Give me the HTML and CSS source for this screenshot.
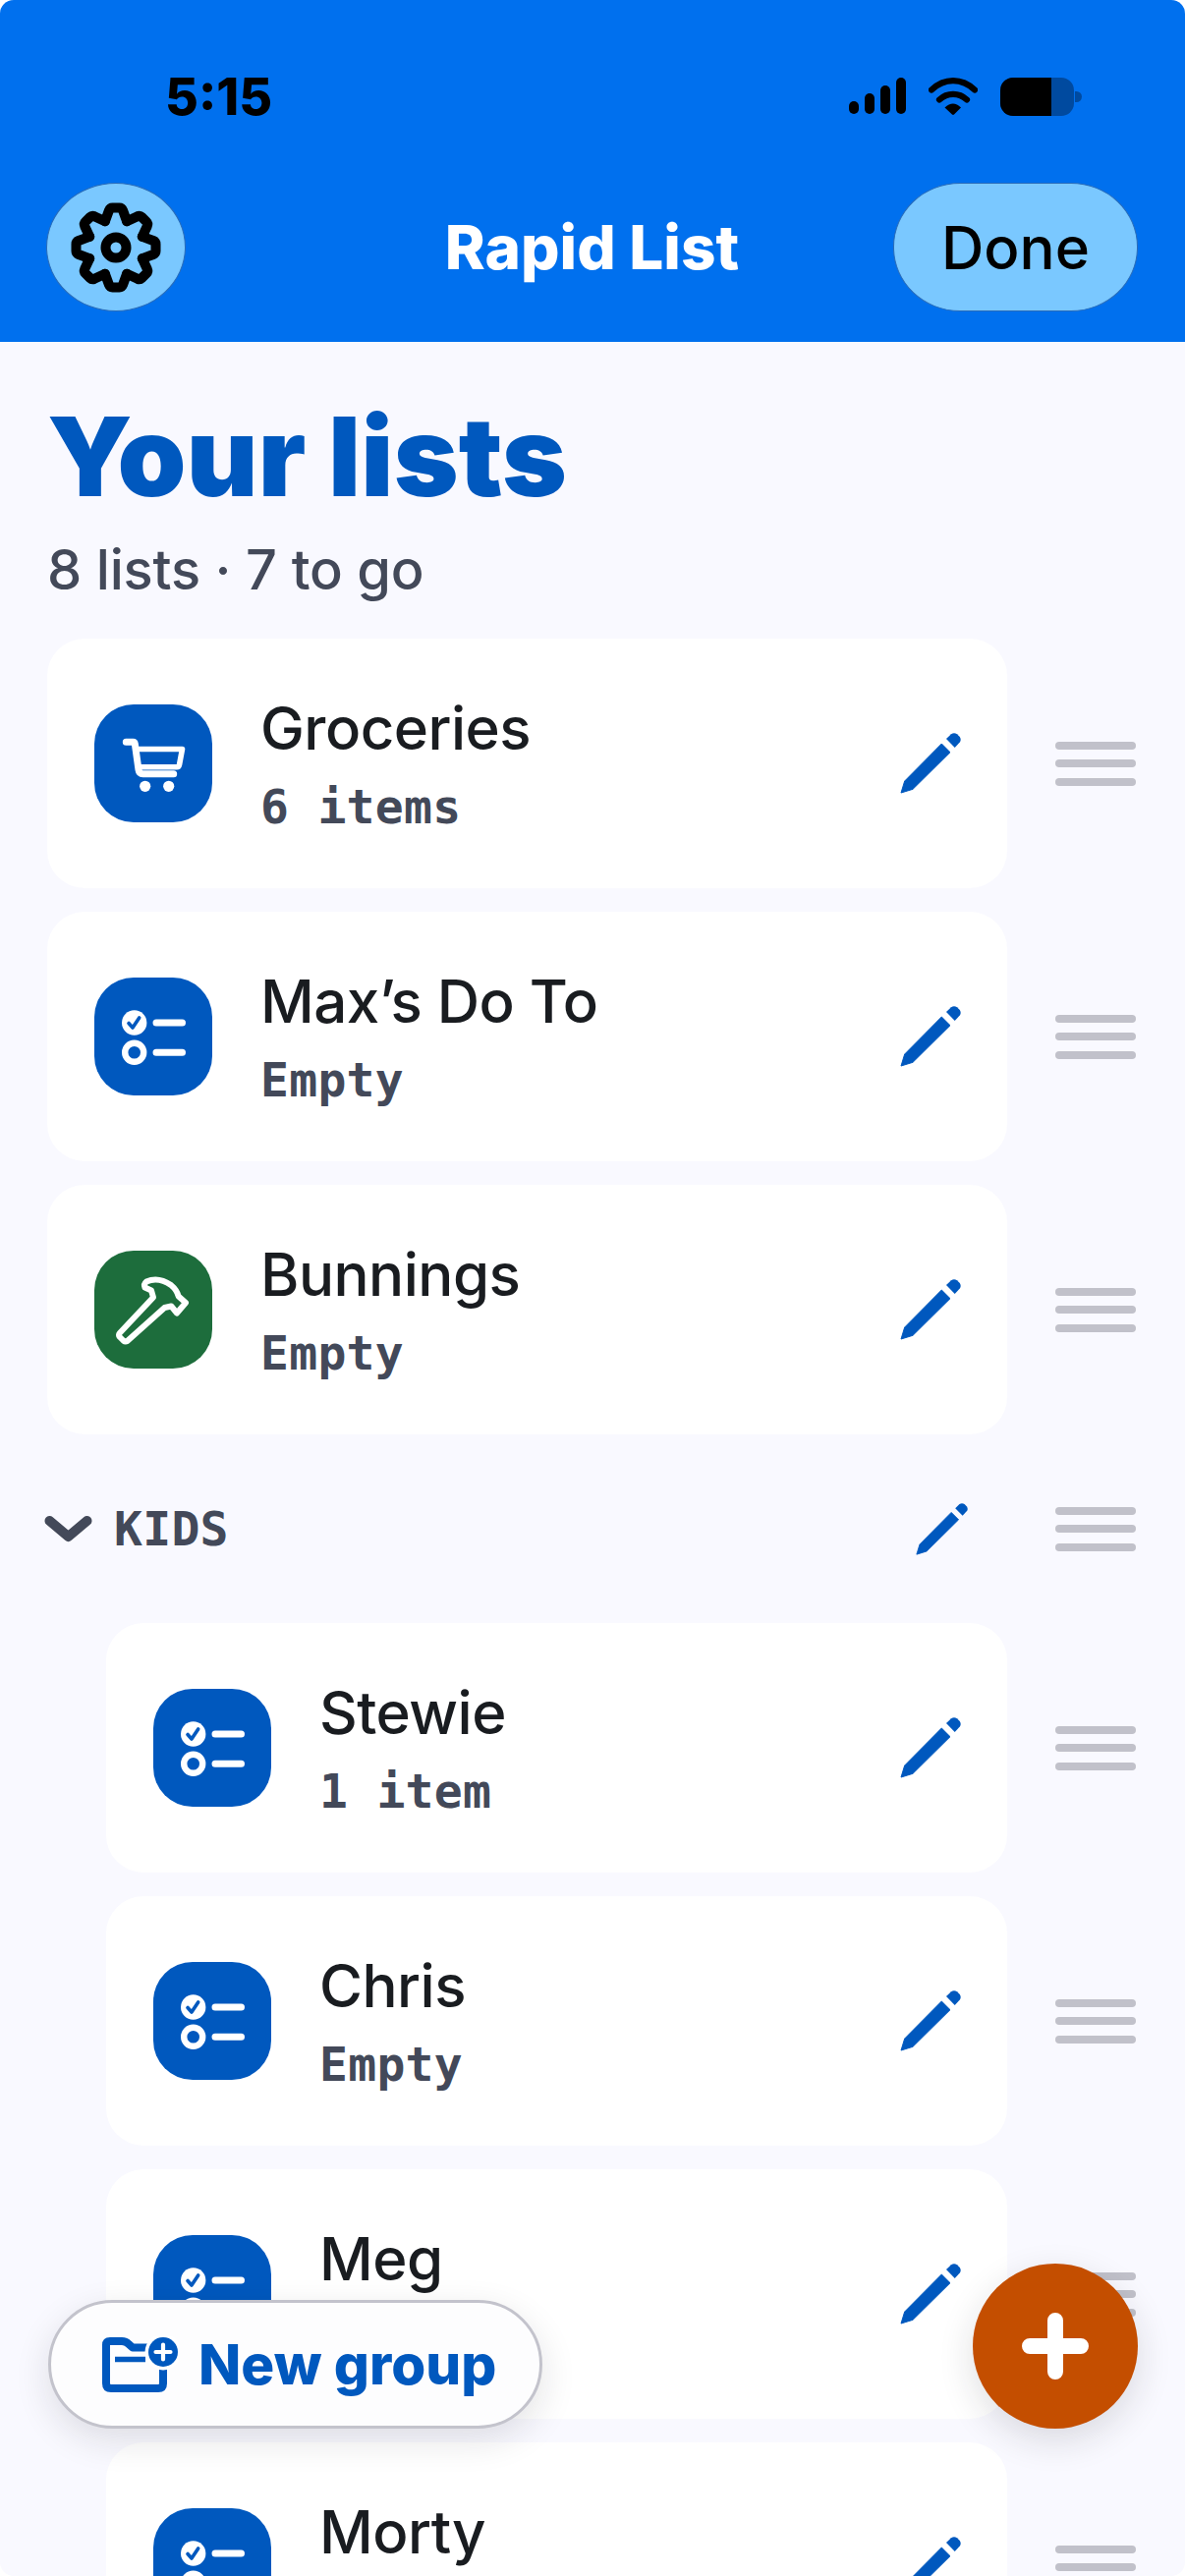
FILE: index.html
```html
<!DOCTYPE html>
<html lang="en">
<head>
<meta charset="utf-8">
<title>Rapid List</title>
<link rel="stylesheet" href="styles.css">
</head>
<body>
<svg class="sprite" xmlns="http://www.w3.org/2000/svg">
  <symbol id="pencil" viewBox="0 0 62 62">
    <path fill="currentColor" stroke="currentColor" stroke-width="1" stroke-linejoin="round" d="M42.3 11 51 19.7 13 57.3 1 61 4.7 49Z"/>
    <path fill="currentColor" d="M47 6 52 1.2Q55 -.6 58 1.2L60.8 4Q62.6 7 60.8 9.5L55.7 15Z"/>
  </symbol>
  <symbol id="list" viewBox="0 0 120 120">
    <circle cx="40.7" cy="46" r="12.7" fill="#fff"/>
    <path d="M35 46.5 39 51 45.7 41" fill="none" stroke="#0058be" stroke-width="3.6" stroke-linecap="round" stroke-linejoin="round"/>
    <circle cx="40.7" cy="76.3" r="9.5" fill="none" stroke="#fff" stroke-width="6.4"/>
    <path d="M63 46H89.5M63 76.3H89.5" stroke="#fff" stroke-width="7" stroke-linecap="round"/>
  </symbol>
</svg>
<div class="app">
  <header class="header">
    <div class="status">
      <span class="time">5:15</span>
      <div class="status-icons">
        <svg class="signal" width="58" height="37" viewBox="0 0 58 37"><rect x="0" y="24" width="10" height="13" rx="5"/><rect x="16" y="16" width="10" height="21" rx="5"/><rect x="32" y="8" width="10" height="29" rx="5"/><rect x="48" y="0" width="10" height="37" rx="5"/></svg>
        <svg class="wifi" width="50" height="38" viewBox="0 0 50 38"><path d="M3 12.5C16 0 34 0 47 12.5M11 22.5C19 15 31 15 39 22.5" fill="none" stroke="#000" stroke-width="6.2" stroke-linecap="round"/><path d="M16.5 30.5Q25 22.5 33 30.5L26 37.5Q25 38.3 24 37.5Z"/></svg>
        <div class="battery"><div class="battery-body"><div class="battery-level"></div></div><div class="battery-nub"></div></div>
      </div>
    </div>
    <nav class="nav">
      <div class="nav-left">
        <button class="settings" aria-label="Settings">
          <svg width="92" height="92" viewBox="-46 -46 92 92" fill="none" stroke="#000" stroke-width="10" stroke-linecap="round" stroke-linejoin="round">
            <circle r="10.5"/>
            <path d="M-11.1 -26.8-7 -38Q-6 -40.5-3.5 -40.5H3.5Q6 -40.5 7 -38L11.1 -26.8"/>
            <path transform="rotate(45)" d="M-11.1 -26.8-7 -38Q-6 -40.5-3.5 -40.5H3.5Q6 -40.5 7 -38L11.1 -26.8"/>
            <path transform="rotate(90)" d="M-11.1 -26.8-7 -38Q-6 -40.5-3.5 -40.5H3.5Q6 -40.5 7 -38L11.1 -26.8"/>
            <path transform="rotate(135)" d="M-11.1 -26.8-7 -38Q-6 -40.5-3.5 -40.5H3.5Q6 -40.5 7 -38L11.1 -26.8"/>
            <path transform="rotate(180)" d="M-11.1 -26.8-7 -38Q-6 -40.5-3.5 -40.5H3.5Q6 -40.5 7 -38L11.1 -26.8"/>
            <path transform="rotate(225)" d="M-11.1 -26.8-7 -38Q-6 -40.5-3.5 -40.5H3.5Q6 -40.5 7 -38L11.1 -26.8"/>
            <path transform="rotate(270)" d="M-11.1 -26.8-7 -38Q-6 -40.5-3.5 -40.5H3.5Q6 -40.5 7 -38L11.1 -26.8"/>
            <path transform="rotate(315)" d="M-11.1 -26.8-7 -38Q-6 -40.5-3.5 -40.5H3.5Q6 -40.5 7 -38L11.1 -26.8"/>
          </svg>
        </button>
      </div>
      <h1 class="app-title">Rapid List</h1>
      <div class="nav-right"><button class="done">Done</button></div>
    </nav>
  </header>

  <main class="content">
    <h2 class="page-title">Your lists</h2>
    <p class="page-sub">8 lists · 7 to go</p>

    <div class="row">
      <div class="card">
        <div class="tile">
          <svg width="120" height="120" viewBox="0 0 120 120">
            <path d="M32.3 38.3H39.5Q41 38.3 41.3 40L45 66.5Q45.6 70.7 49.5 70.7H80.7" fill="none" stroke="#fff" stroke-width="7" stroke-linecap="round" stroke-linejoin="round"/>
            <path d="M42 45.5H89.5L86.5 61.5Q86 63.8 84 63.8H46" fill="none" stroke="#fff" stroke-width="5.6" stroke-linejoin="round"/>
            <circle cx="51.7" cy="83.3" r="5.6" fill="#fff"/><circle cx="75.7" cy="83.3" r="5.6" fill="#fff"/>
          </svg>
        </div>
        <div class="info"><div class="name">Groceries</div><div class="meta">6 items</div></div>
        <svg class="pencil" width="62" height="62"><use href="#pencil"/></svg>
      </div>
      <div class="handle"><i></i><i></i><i></i></div>
    </div>

    <div class="row">
      <div class="card">
        <div class="tile"><svg width="120" height="120"><use href="#list"/></svg></div>
        <div class="info"><div class="name">Max’s Do To</div><div class="meta">Empty</div></div>
        <svg class="pencil" width="62" height="62"><use href="#pencil"/></svg>
      </div>
      <div class="handle"><i></i><i></i><i></i></div>
    </div>

    <div class="row">
      <div class="card">
        <div class="tile tile-green">
          <svg width="120" height="120" viewBox="0 0 120 120">
            <path d="M25.7 84 60 47.5 58 40.5 51.5 37.5Q50 34 53 31.5 65 26 78 35 84 40 85.7 46.5L93 53 84 63.5 78.3 56.5 71.5 58 33.5 92Q31.5 93 29.500 91.5L25.5 87.5Q24.5 85.5 25.7 84Z" fill="none" stroke="#fff" stroke-width="6" stroke-linejoin="round"/>
          </svg>
        </div>
        <div class="info"><div class="name">Bunnings</div><div class="meta">Empty</div></div>
        <svg class="pencil" width="62" height="62"><use href="#pencil"/></svg>
      </div>
      <div class="handle"><i></i><i></i><i></i></div>
    </div>

    <div class="row group-row">
      <div class="group-head">
        <svg class="chevron" width="49" height="28" viewBox="0 0 49 28"><path d="M5.500 6 24.500 22 43.500 6" fill="none" stroke="#434959" stroke-width="10" stroke-linecap="round" stroke-linejoin="round"/></svg>
        <span class="group-name">KIDS</span>
        <svg class="pencil-small" width="53" height="53"><use href="#pencil"/></svg>
      </div>
      <div class="handle"><i></i><i></i><i></i></div>
    </div>

    <div class="row nested">
      <div class="card">
        <div class="tile"><svg width="120" height="120"><use href="#list"/></svg></div>
        <div class="info"><div class="name">Stewie</div><div class="meta">1 item</div></div>
        <svg class="pencil" width="62" height="62"><use href="#pencil"/></svg>
      </div>
      <div class="handle"><i></i><i></i><i></i></div>
    </div>

    <div class="row nested">
      <div class="card">
        <div class="tile"><svg width="120" height="120"><use href="#list"/></svg></div>
        <div class="info"><div class="name">Chris</div><div class="meta">Empty</div></div>
        <svg class="pencil" width="62" height="62"><use href="#pencil"/></svg>
      </div>
      <div class="handle"><i></i><i></i><i></i></div>
    </div>

    <div class="row nested">
      <div class="card">
        <div class="tile"><svg width="120" height="120"><use href="#list"/></svg></div>
        <div class="info"><div class="name">Meg</div><div class="meta">&nbsp;</div></div>
        <svg class="pencil" width="62" height="62"><use href="#pencil"/></svg>
      </div>
      <div class="handle"><i></i><i></i><i></i></div>
    </div>

    <div class="row nested">
      <div class="card">
        <div class="tile"><svg width="120" height="120"><use href="#list"/></svg></div>
        <div class="info"><div class="name">Morty</div><div class="meta">&nbsp;</div></div>
        <svg class="pencil" width="62" height="62"><use href="#pencil"/></svg>
      </div>
      <div class="handle"><i></i><i></i><i></i></div>
    </div>
  </main>

  <button class="new-group">
    <svg width="78" height="58" viewBox="0 0 78 58">
      <path d="M62 28V48Q62 53 57 53H9Q4 53 4 48V9Q4 5 8 5H20Q24 5 27 8L31 11.500H46" fill="none" stroke="#0058be" stroke-width="8" stroke-linejoin="round"/>
      <path d="M13 23.500H44" stroke="#0058be" stroke-width="5.500"/>
      <circle cx="62" cy="16" r="18.500" fill="#fff"/>
      <circle cx="62" cy="16" r="15" fill="#0058be"/>
      <path d="M62 8.500V23.500M54.500 16H69.500" stroke="#fff" stroke-width="4.200" stroke-linecap="round"/>
    </svg>
    <span>New group</span>
  </button>

  <button class="fab" aria-label="Add list">
    <svg width="68" height="68" viewBox="0 0 68 68"><path d="M34 8V60M8 34H60" stroke="#fff" stroke-width="16" stroke-linecap="round"/></svg>
  </button>
</div>
</body>
</html>
```
FILE: styles.css
```css
* { box-sizing: border-box; }

html, body {
  margin: 0;
  padding: 0;
  background: #fff;
}

.sprite { display: none; }

.app {
  position: relative;
  width: 1206px;
  height: 2622px;
  overflow: hidden;
  border-radius: 14px;
  background: #f9f9ff;
  font-family: Inter, "Noto Sans", sans-serif;
}

button {
  font-family: inherit;
  padding: 0;
  cursor: pointer;
}

/* Header */
.header {
  height: 348px;
  background: #0070ee;
  padding-top: 79px;
}

.status {
  display: flex;
  justify-content: space-between;
  height: 39px;
  padding: 0 105px 0 168px;
}

.time {
  font-size: 52px;
  line-height: 39px;
  font-weight: 800;
  color: #000;
}

.status-icons {
  display: flex;
  gap: 23px;
}

.battery {
  display: flex;
  align-items: center;
}

.battery-body {
  width: 75px;
  height: 39px;
  border-radius: 13px;
  background: #004a9f;
  overflow: hidden;
}

.battery-level {
  width: 52px;
  height: 100%;
  background: #000;
}

.battery-nub {
  width: 7px;
  height: 11px;
  margin-left: 1px;
  border-radius: 0 6px 6px 0;
  background: #004a9f;
}

.nav {
  display: grid;
  grid-template-columns: 1fr auto 1fr;
  align-items: center;
  margin-top: 68px;
  padding: 0 48px 0 47px;
}

.nav-right { display: flex; justify-content: flex-end; }

.settings {
  display: flex;
  align-items: center;
  justify-content: center;
  width: 142px;
  height: 131px;
  border-radius: 50%;
  border: 1px solid #2a6cb8;
  background: #7ac8ff;
}

.done {
  width: 249px;
  height: 131px;
  border-radius: 68px / 65px;
  border: 1px solid #2a6cb8;
  background: #7ac8ff;
  color: #000;
  font-size: 60px;
  font-weight: 500;
}

.app-title {
  margin: 0;
  color: #fff;
  font-size: 62px;
  font-weight: 800;
  line-height: 72px;
}

/* Content */
.content { padding: 0 50px 0 48px; }

.page-title {
  margin: 0;
  padding-top: 54px;
  color: #0058be;
  font-size: 112px;
  font-weight: 900;
  line-height: 124px;
  letter-spacing: 0.200px;
}

.page-sub {
  margin: 16px 0 32px;
  color: #434959;
  font-size: 56px;
  font-weight: 500;
  line-height: 76px;
  letter-spacing: -0.200px;
}

.row {
  display: grid;
  grid-template-columns: 1fr 82px;
  column-gap: 49px;
  align-items: center;
  margin-bottom: 24px;
}

.nested { padding-left: 60px; }

.card {
  display: flex;
  align-items: center;
  gap: 49px;
  height: 254px;
  padding: 0 47px 0 48px;
  border-radius: 38px;
  background: #fff;
}

.tile {
  flex: none;
  width: 120px;
  height: 120px;
  border-radius: 40px;
  background: #0058be;
}

.tile svg { display: block; }

.tile-green { background: #1d6d3c; }

.info {
  flex: 1;
  min-width: 0;
  padding-top: 3px;
}

.name {
  color: #191c20;
  font-size: 60px;
  font-weight: 550;
  line-height: 76px;
  letter-spacing: -0.500px;
}

.meta {
  margin-top: 9px;
  color: #434959;
  font-family: "DejaVu Sans Mono", "Liberation Mono", monospace;
  font-size: 48px;
  font-weight: 700;
  line-height: 66px;
  letter-spacing: 0.300px;
}

.pencil,
.pencil-small {
  flex: none;
  color: #0058be;
}

.handle {
  display: flex;
  flex-direction: column;
  gap: 10.500px;
}

.handle i {
  display: block;
  height: 8px;
  border-radius: 4px;
  background: #c1c1ca;
}

.group-head {
  display: flex;
  align-items: center;
  height: 144px;
  margin-left: -3px;
  padding-right: 40px;
}

.chevron { flex: none; }

.group-name {
  flex: 1;
  margin-left: 22px;
  color: #434959;
  font-family: "DejaVu Sans Mono", "Liberation Mono", monospace;
  font-size: 48px;
  font-weight: 700;
  letter-spacing: 0.300px;
}

/* Floating buttons */
.new-group {
  position: absolute;
  left: 49px;
  top: 2341px;
  display: flex;
  align-items: center;
  gap: 20px;
  width: 503px;
  height: 131px;
  padding-left: 52px;
  border: 3px solid #c3c3cc;
  border-radius: 66px;
  background: #fdfdfe;
  box-shadow: 0 12px 36px rgba(25, 28, 32, 0.12);
  color: #0058be;
  font-size: 56.600px;
  font-weight: 800;
}

.fab {
  position: absolute;
  left: 990px;
  top: 2304px;
  display: flex;
  align-items: center;
  justify-content: center;
  width: 168px;
  height: 168px;
  border: 0;
  border-radius: 50%;
  background: #c44e00;
  box-shadow: 0 12px 36px rgba(25, 28, 32, 0.14);
}
```
